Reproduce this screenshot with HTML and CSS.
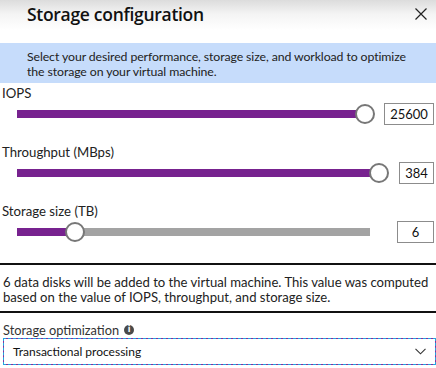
FILE: index.html
```html
<!DOCTYPE html>
<html>
<head>
<meta charset="utf-8">
<link rel="stylesheet" href="styles.css">
</head>
<body>
<div class="panel">
  <div class="header">
    <h1 class="title">Storage configuration</h1>
    <svg class="close" width="12" height="12" viewBox="0 0 12 12"><path d="M0.5 0.5 L11.5 11.5 M11.5 0.5 L0.5 11.5" stroke="#222" stroke-width="1.2" fill="none"/></svg>
  </div>
  <div class="banner">Select your desired performance, storage size, and workload to optimize the storage on your virtual machine.</div>

  <div class="group">
    <div class="label">IOPS</div>
    <div class="row">
      <div class="slider" style="width:348px">
        <div class="fill" style="width:348px"></div><div class="thumb"></div><div class="rest"></div>
      </div>
      <div class="valbox" style="width:50px">25600</div>
    </div>
  </div>

  <div class="group">
    <div class="label">Throughput (MBps)</div>
    <div class="row">
      <div class="slider" style="width:362px">
        <div class="fill" style="width:362px"></div><div class="thumb"></div><div class="rest"></div>
      </div>
      <div class="valbox" style="width:35px">384</div>
    </div>
  </div>

  <div class="group">
    <div class="label">Storage size (TB)</div>
    <div class="row">
      <div class="slider" style="width:353px">
        <div class="fill" style="width:58px"></div><div class="thumb"></div><div class="rest"></div>
      </div>
      <div class="valbox" style="width:37px">6</div>
    </div>
  </div>

  <div class="note">6 data disks will be added to the virtual machine. This value was computed based on the value of IOPS, throughput, and storage size.</div>

  <div class="optlabel">Storage optimization <span class="info">i</span></div>
  <div class="select">
    <span>Transactional processing</span>
    <svg class="chev" width="11" height="7" viewBox="0 0 11 7"><path d="M0.5 0.8 L5.5 5.8 L10.5 0.8" stroke="#333" stroke-width="1.1" fill="none"/></svg>
  </div>
</div>
</body>
</html>
```
FILE: styles.css
```css
* { box-sizing: border-box; }
html, body { margin: 0; padding: 0; background: #fff; }
body {
  width: 436px;
  height: 368px;
  overflow: hidden;
  font-family: Lato, "Open Sans", sans-serif;
  color: #1e1e1e;
}
.header {
  height: 43px;
  display: flex;
  align-items: flex-start;
  justify-content: space-between;
  padding: 0 9px 0 27px;
  background: linear-gradient(#dcdcdc 0px, #f4f4f4 14px, #ffffff 30px);
}
.title {
  margin: 0;
  font-family: "Open Sans", sans-serif;
  font-size: 17.5px;
  font-weight: 600;
  line-height: 24px;
  padding-top: 2px;
  color: #111;
  letter-spacing: -0.3px;
}
.close { margin-top: 8px; }
.banner {
  height: 40px;
  background: #c6dcfb;
  padding: 6px 20px 0 27px;
  font-size: 12.3px;
  letter-spacing: -0.1px;
  line-height: 15px;
  color: #222;
}
.group { padding-top: 1px; }
.group + .group { margin-top: 17px; }
.label {
  font-size: 13.2px;
  line-height: 18px;
  padding-left: 2px;
  color: #222;
}
.row {
  display: flex;
  align-items: center;
  height: 22px;
  margin-top: 1px;
  padding-left: 17px;
}
.slider {
  display: flex;
  align-items: center;
  height: 22px;
}
.fill { height: 8px; background: #77228f; flex: none; }
.rest { height: 8px; background: #a3a3a3; flex: 1; }
.thumb {
  width: 20px;
  height: 20px;
  border-radius: 50%;
  border: 2px solid #777;
  background: #fff;
  margin: 0 -10px;
  flex: none;
  position: relative;
  z-index: 1;
}
.valbox {
  margin-left: auto;
  margin-right: 2px;
  height: 22px;
  border: 1px solid #8c8c8c;
  font-size: 13px;
  line-height: 20px;
  text-align: center;
  color: #111;
}
.note {
  margin-top: 20px;
  border-top: 2px solid #111;
  border-bottom: 2px solid #111;
  padding: 10px 0 6px 3px;
  font-size: 13.1px;
  line-height: 15px;
  color: #222;
}
.optlabel {
  margin-top: 9px;
  padding-left: 3px;
  font-size: 12.8px;
  line-height: 16px;
  color: #333;
  display: flex;
  align-items: center;
  gap: 5px;
}
.info {
  width: 10px;
  height: 10px;
  border-radius: 50%;
  background: #4a4a4a;
  color: #fff;
  font-size: 8px;
  font-weight: 700;
  line-height: 10px;
  text-align: center;
  font-family: "DejaVu Sans", sans-serif;
}
.select {
  margin: 0 0 0 3px;
  height: 27px;
  display: flex;
  align-items: center;
  justify-content: space-between;
  padding: 0 9px 0 9px;
  border: 1px dashed #22a6e0;
  background: linear-gradient(#fff, #fff) padding-box, #8a2a9c border-box;
  font-size: 12px;
  color: #111;
}
```
